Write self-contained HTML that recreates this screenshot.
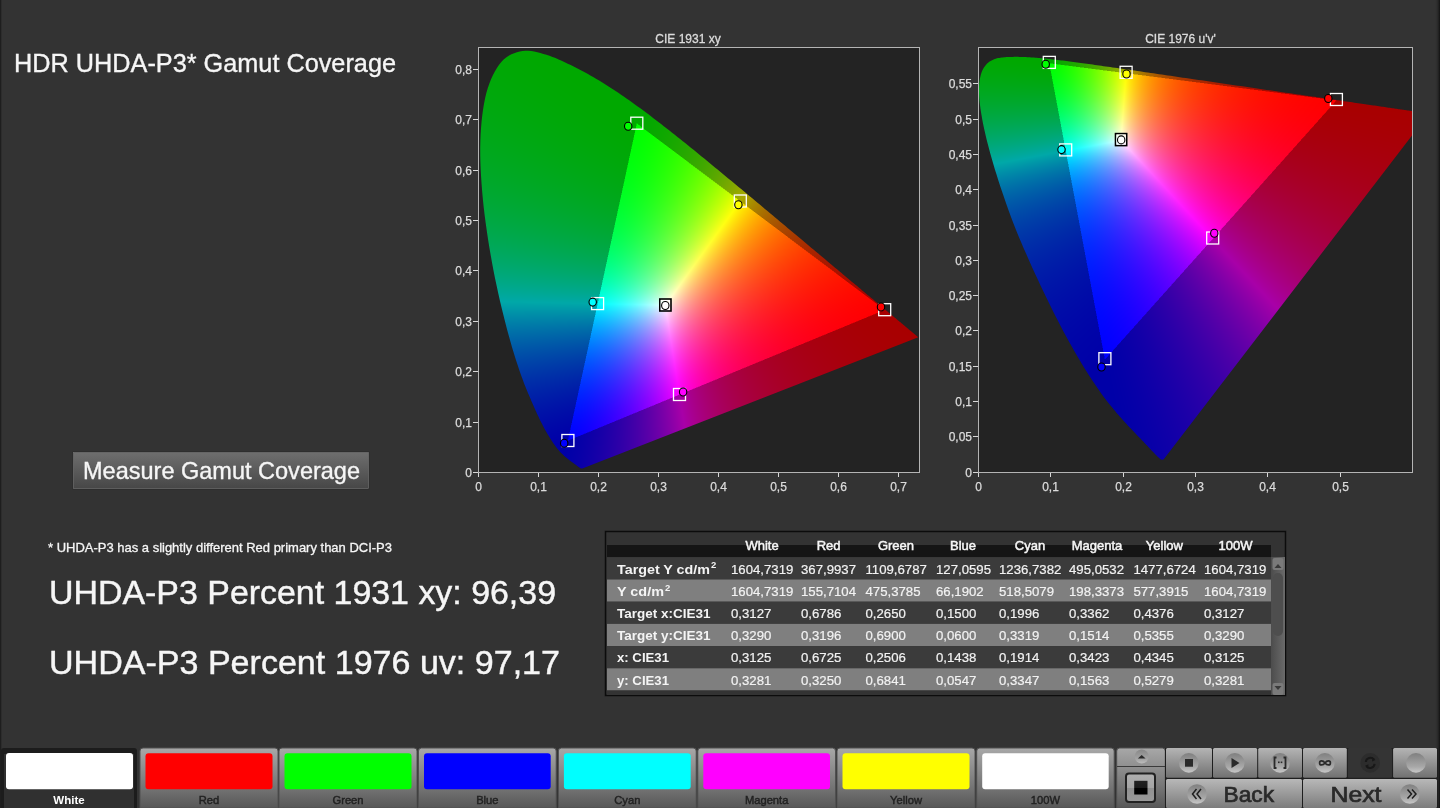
<!DOCTYPE html>
<html><head><meta charset="utf-8">
<style>
html,body{margin:0;padding:0;}
body{width:1440px;height:808px;overflow:hidden;background:#333333;position:relative;font-family:"Liberation Sans",sans-serif;}
canvas{position:absolute;}
.pbg{position:absolute;background:#232323;}
#cv1{left:478px;top:47px;}
#cv2{left:978px;top:47px;}
svg#main{position:absolute;left:0;top:0;}
</style></head><body>
<div class="pbg" style="left:478px;top:47px;width:441px;height:425px"></div><div class="pbg" style="left:978px;top:47px;width:434px;height:425px"></div>
<div id="fb1" class="fb" style="position:absolute;left:478px;top:47px;width:441px;height:425px;overflow:hidden"><svg width="441" height="425" style="position:absolute;left:0;top:0"><defs><clipPath id="fb1c"><path d="M104.3 421.4 L104.3 421.4 L104.3 421.4 L104.3 421.4 L104.3 421.4 L104.3 421.4 L104.3 421.4 L104.3 421.4 L104.3 421.4 L104.3 421.4 L104.2 421.4 L104.2 421.4 L104.2 421.4 L104.2 421.4 L104.2 421.4 L104.2 421.4 L104.2 421.4 L104.1 421.4 L104.1 421.4 L104.1 421.4 L104.1 421.4 L104.1 421.4 L104.1 421.4 L104.1 421.4 L104.0 421.4 L104.0 421.4 L104.0 421.4 L104.0 421.4 L104.0 421.5 L103.9 421.5 L103.9 421.5 L103.9 421.5 L103.9 421.5 L103.8 421.5 L103.8 421.5 L103.8 421.5 L103.8 421.5 L103.8 421.5 L103.7 421.5 L103.7 421.5 L103.7 421.5 L103.7 421.5 L103.6 421.5 L103.6 421.5 L103.6 421.5 L103.5 421.5 L103.5 421.5 L103.5 421.5 L103.4 421.5 L103.4 421.5 L103.4 421.5 L103.3 421.5 L103.3 421.5 L103.3 421.5 L103.2 421.5 L103.2 421.5 L103.1 421.5 L103.1 421.5 L103.0 421.5 L103.0 421.4 L103.0 421.4 L102.9 421.4 L102.8 421.4 L102.8 421.4 L102.7 421.3 L102.7 421.3 L102.6 421.3 L102.5 421.2 L102.4 421.2 L102.3 421.1 L102.2 421.1 L102.2 421.0 L102.1 421.0 L102.0 420.9 L101.9 420.9 L101.8 420.8 L101.7 420.7 L101.6 420.7 L101.5 420.6 L101.3 420.5 L101.2 420.4 L101.1 420.3 L101.0 420.2 L100.8 420.1 L100.7 420.0 L100.5 419.9 L100.3 419.8 L100.2 419.7 L100.0 419.6 L99.8 419.4 L99.7 419.3 L99.5 419.2 L99.3 419.0 L99.1 418.9 L98.9 418.7 L98.7 418.6 L98.5 418.4 L98.3 418.2 L98.1 418.1 L97.8 417.9 L97.6 417.7 L97.4 417.6 L97.1 417.4 L96.8 417.2 L96.5 416.9 L96.2 416.7 L95.9 416.5 L95.6 416.3 L95.3 416.0 L94.9 415.8 L94.6 415.5 L94.2 415.3 L93.8 415.0 L93.5 414.7 L93.1 414.4 L92.7 414.1 L92.3 413.8 L91.8 413.5 L91.4 413.2 L91.0 412.8 L90.5 412.5 L90.0 412.1 L89.5 411.7 L89.0 411.3 L88.5 410.9 L88.0 410.4 L87.4 410.0 L86.9 409.5 L86.3 408.9 L85.7 408.4 L85.1 407.9 L84.5 407.3 L83.9 406.7 L83.3 406.1 L82.6 405.4 L81.9 404.6 L81.2 403.8 L80.5 402.9 L79.7 402.0 L78.8 401.0 L78.0 399.9 L77.2 398.8 L76.2 397.5 L75.3 396.2 L74.4 394.8 L73.4 393.3 L72.4 391.7 L71.3 390.1 L70.3 388.4 L69.2 386.5 L68.1 384.6 L66.9 382.5 L65.7 380.2 L64.4 377.8 L63.2 375.3 L61.9 372.6 L60.5 369.9 L59.1 366.9 L57.7 363.8 L56.2 360.6 L54.7 357.1 L53.1 353.4 L51.5 349.6 L49.8 345.6 L48.1 341.5 L46.4 337.1 L44.6 332.6 L42.9 327.8 L41.2 322.8 L39.4 317.6 L37.7 312.2 L35.9 306.5 L34.2 300.6 L32.4 294.6 L30.6 288.4 L28.9 281.9 L27.2 275.3 L25.5 268.5 L23.8 261.4 L22.1 254.2 L20.4 246.7 L18.7 239.1 L17.1 231.4 L15.5 223.8 L14.1 216.1 L12.7 208.3 L11.4 200.4 L10.1 192.4 L8.8 184.4 L7.7 176.3 L6.7 168.3 L5.7 160.5 L4.9 152.8 L4.2 145.1 L3.6 137.5 L3.1 130.0 L2.7 122.5 L2.4 115.1 L2.2 107.9 L2.2 100.9 L2.3 94.1 L2.6 87.5 L3.0 81.0 L3.6 74.6 L4.2 68.4 L5.0 62.4 L6.0 56.7 L7.1 51.2 L8.3 46.1 L9.7 41.3 L11.3 36.7 L13.0 32.3 L14.9 28.2 L16.8 24.4 L18.9 20.9 L21.1 17.8 L23.3 15.0 L25.6 12.5 L28.1 10.5 L30.7 8.7 L33.4 7.3 L36.1 6.2 L38.9 5.2 L41.7 4.5 L44.5 4.0 L47.4 3.7 L50.3 3.8 L53.3 4.1 L56.3 4.6 L59.3 5.3 L62.4 6.1 L65.4 6.9 L68.4 7.8 L71.5 8.8 L74.5 9.9 L77.6 11.1 L80.6 12.4 L83.7 13.8 L86.7 15.2 L89.7 16.6 L92.7 18.1 L95.7 19.5 L98.5 20.9 L101.4 22.4 L104.3 23.9 L107.2 25.5 L110.0 27.1 L112.8 28.7 L115.6 30.3 L118.4 31.9 L121.2 33.6 L123.9 35.3 L126.7 37.0 L129.4 38.7 L132.1 40.5 L134.9 42.2 L137.6 44.0 L140.3 45.9 L143.1 47.7 L145.8 49.6 L148.5 51.4 L151.2 53.3 L153.9 55.3 L156.6 57.2 L159.3 59.1 L162.0 61.1 L164.7 63.1 L167.4 65.1 L170.0 67.1 L172.7 69.1 L175.4 71.2 L178.1 73.2 L180.8 75.3 L183.4 77.3 L186.1 79.4 L188.8 81.5 L191.4 83.6 L194.1 85.7 L196.8 87.8 L199.5 90.0 L202.1 92.1 L204.8 94.2 L207.5 96.4 L210.2 98.5 L212.9 100.7 L215.6 102.9 L218.2 105.0 L220.9 107.2 L223.6 109.4 L226.3 111.6 L228.9 113.8 L231.6 116.0 L234.3 118.2 L236.9 120.4 L239.6 122.6 L242.3 124.8 L244.9 127.0 L247.6 129.2 L250.3 131.4 L252.9 133.6 L255.6 135.8 L258.2 138.0 L260.9 140.2 L263.5 142.4 L266.1 144.6 L268.8 146.7 L271.4 148.9 L274.0 151.1 L276.6 153.3 L279.2 155.4 L281.8 157.6 L284.4 159.8 L286.9 161.9 L289.5 164.1 L292.1 166.2 L294.6 168.3 L297.1 170.5 L299.7 172.6 L302.2 174.7 L304.7 176.8 L307.1 178.8 L309.6 180.9 L312.1 183.0 L314.5 185.0 L316.9 187.1 L319.4 189.1 L321.8 191.1 L324.1 193.1 L326.5 195.1 L328.8 197.0 L331.2 199.0 L333.5 200.9 L335.8 202.8 L338.1 204.7 L340.3 206.6 L342.5 208.4 L344.7 210.3 L346.9 212.1 L349.0 213.9 L351.2 215.7 L353.2 217.4 L355.3 219.2 L357.4 220.9 L359.4 222.6 L361.3 224.2 L363.2 225.8 L365.1 227.4 L367.0 229.0 L368.8 230.5 L370.6 232.0 L372.3 233.4 L374.1 234.9 L375.8 236.3 L377.4 237.7 L379.1 239.1 L380.8 240.5 L382.4 241.8 L383.9 243.2 L385.5 244.4 L387.0 245.7 L388.5 246.9 L389.9 248.1 L391.3 249.3 L392.7 250.4 L394.0 251.5 L395.3 252.6 L396.6 253.7 L397.8 254.7 L399.0 255.7 L400.2 256.7 L401.3 257.6 L402.4 258.6 L403.5 259.5 L404.6 260.4 L405.6 261.2 L406.6 262.1 L407.6 262.9 L408.5 263.7 L409.4 264.5 L410.3 265.2 L411.2 265.9 L412.0 266.6 L412.9 267.3 L413.6 268.0 L414.4 268.6 L415.2 269.3 L415.9 269.9 L416.6 270.5 L417.3 271.0 L418.0 271.6 L418.6 272.1 L419.2 272.7 L419.9 273.2 L420.5 273.7 L421.1 274.2 L421.6 274.6 L422.2 275.1 L422.7 275.6 L423.2 276.0 L423.7 276.4 L424.2 276.9 L424.7 277.3 L425.2 277.7 L425.7 278.1 L426.2 278.5 L426.6 278.8 L427.1 279.2 L427.5 279.6 L427.9 279.9 L428.3 280.3 L428.7 280.6 L429.1 280.9 L429.5 281.2 L429.9 281.6 L430.2 281.9 L430.6 282.1 L430.9 282.4 L431.2 282.7 L431.6 283.0 L431.9 283.2 L432.2 283.5 L432.5 283.7 L432.8 284.0 L433.0 284.2 L433.3 284.4 L433.6 284.6 L433.8 284.8 L434.0 285.0 L434.3 285.2 L434.5 285.4 L434.7 285.6 L434.9 285.7 L435.1 285.9 L435.3 286.1 L435.5 286.2 L435.7 286.4 L435.8 286.5 L436.0 286.7 L436.2 286.8 L436.3 286.9 L436.5 287.1 L436.6 287.2 L436.8 287.3 L436.9 287.4 L437.0 287.5 L437.1 287.6 L437.3 287.7 L437.4 287.8 L437.5 287.9 L437.6 288.0 L437.7 288.1 L437.8 288.2 L437.9 288.2 L437.9 288.3 L438.0 288.4 L438.1 288.4 L438.1 288.5 L438.2 288.5 L438.3 288.6 L438.4 288.6 L438.4 288.7 L438.5 288.8 L438.5 288.8 L438.6 288.9 L438.7 288.9 L438.8 289.0 L438.9 289.1 L439.0 289.2 L439.1 289.3 L439.2 289.4 L439.3 289.5 L439.4 289.6 L439.5 289.6 L439.6 289.7 L439.7 289.8 L439.8 289.9 L439.9 289.9 L439.9 290.0 L440.0 290.1 L440.1 290.1 L440.1 290.1 L440.2 290.2 L440.2 290.2 L440.2 290.2 L440.2 290.2 L440.3 290.3 L440.3 290.3 L440.3 290.3 L440.3 290.3 Z"/></clipPath>
<linearGradient id="fb1gl" gradientUnits="userSpaceOnUse" x1="134.4" y1="71.1" x2="65.5" y2="388.4"><stop offset="0.000" stop-color="#00a801"/><stop offset="0.125" stop-color="#00a80c"/><stop offset="0.250" stop-color="#00a81f"/><stop offset="0.375" stop-color="#00a83d"/><stop offset="0.500" stop-color="#00a871"/><stop offset="0.625" stop-color="#0089a8"/><stop offset="0.750" stop-color="#0046a8"/><stop offset="0.875" stop-color="#001da8"/><stop offset="1.000" stop-color="#0005a8"/></linearGradient><linearGradient id="fb1gb" gradientUnits="userSpaceOnUse" x1="99.4" y1="416.8" x2="416.2" y2="286.1"><stop offset="0.000" stop-color="#0700a8"/><stop offset="0.125" stop-color="#2b00a8"/><stop offset="0.250" stop-color="#6900a8"/><stop offset="0.375" stop-color="#a80089"/><stop offset="0.500" stop-color="#a8004b"/><stop offset="0.625" stop-color="#a80029"/><stop offset="0.750" stop-color="#a80015"/><stop offset="0.875" stop-color="#a80008"/><stop offset="1.000" stop-color="#a80001"/></linearGradient><linearGradient id="fb1gt" gradientUnits="userSpaceOnUse" x1="162.4" y1="71.6" x2="410.3" y2="258.2"><stop offset="0.000" stop-color="#01a800"/><stop offset="0.125" stop-color="#16a800"/><stop offset="0.250" stop-color="#40a800"/><stop offset="0.375" stop-color="#87a800"/><stop offset="0.500" stop-color="#a86e00"/><stop offset="0.625" stop-color="#a83900"/><stop offset="0.750" stop-color="#a81b00"/><stop offset="0.875" stop-color="#a80a00"/><stop offset="1.000" stop-color="#a80000"/></linearGradient>
</defs><g clip-path="url(#fb1c)"><polygon points="158.8,76.4 572.3,-1827.2 -2000.0,-2000.0 -2000.0,3000.0 -323.6,2297.3" fill="url(#fb1gl)"/><polygon points="89.9,393.7 -1810.8,1178.1 -2000.0,3000.0 3000.0,3000.0 2307.4,-521.5" fill="url(#fb1gb)"/><polygon points="406.7,262.9 1893.9,1382.2 -2000.0,-2000.0 3000.0,-2000.0 -1328.4,-1042.8" fill="url(#fb1gt)"/></g></svg><div style="position:absolute;left:0;top:0;width:441px;height:425px;clip-path:polygon(406.7px 262.9px,158.8px 76.4px,89.9px 393.7px);background:radial-gradient(circle at 187.4px 258.2px,rgba(255,255,255,1) 0px,rgba(255,255,255,0.55) 18px,rgba(255,255,255,0) 70px),conic-gradient(from 35.7deg at 187.4px 258.2px,#ffff00 0.0deg,#ff0000 55.5deg,#ff00ff 135.3deg,#0000ff 180.0deg,#00ffff 235.5deg,#00ff00 315.3deg,#ffff00 360deg);"></div></div><div id="fb2" class="fb" style="position:absolute;left:978px;top:47px;width:434px;height:425px;overflow:hidden"><svg width="434" height="425" style="position:absolute;left:0;top:0"><defs><clipPath id="fb2c"><path d="M185.8 412.3 L185.7 412.3 L185.7 412.3 L185.7 412.3 L185.7 412.3 L185.7 412.3 L185.7 412.3 L185.6 412.3 L185.6 412.3 L185.6 412.3 L185.6 412.3 L185.6 412.4 L185.6 412.4 L185.5 412.4 L185.5 412.5 L185.5 412.5 L185.5 412.5 L185.4 412.5 L185.4 412.5 L185.4 412.5 L185.3 412.5 L185.3 412.5 L185.3 412.5 L185.3 412.5 L185.2 412.5 L185.2 412.5 L185.2 412.6 L185.1 412.6 L185.1 412.6 L185.1 412.7 L185.0 412.7 L185.0 412.7 L184.9 412.8 L184.9 412.8 L184.9 412.8 L184.8 412.8 L184.8 412.8 L184.7 412.8 L184.7 412.8 L184.6 412.8 L184.6 412.8 L184.5 412.8 L184.5 412.8 L184.4 412.8 L184.4 412.8 L184.3 412.8 L184.2 412.8 L184.2 412.8 L184.1 412.8 L184.0 412.8 L184.0 412.8 L183.9 412.8 L183.8 412.8 L183.8 412.8 L183.7 412.8 L183.6 412.8 L183.5 412.8 L183.4 412.7 L183.3 412.7 L183.2 412.6 L183.0 412.5 L182.9 412.4 L182.8 412.3 L182.6 412.2 L182.4 412.1 L182.2 411.9 L182.0 411.8 L181.8 411.6 L181.6 411.4 L181.3 411.2 L181.1 411.0 L180.8 410.8 L180.6 410.5 L180.3 410.2 L180.0 410.0 L179.7 409.7 L179.4 409.4 L179.1 409.1 L178.8 408.8 L178.4 408.4 L178.0 408.0 L177.6 407.6 L177.2 407.2 L176.8 406.8 L176.3 406.3 L175.8 405.8 L175.4 405.3 L174.9 404.8 L174.4 404.3 L173.8 403.7 L173.3 403.1 L172.8 402.5 L172.2 401.9 L171.6 401.3 L171.0 400.6 L170.4 400.0 L169.8 399.3 L169.1 398.6 L168.4 397.9 L167.7 397.2 L167.0 396.4 L166.3 395.6 L165.5 394.9 L164.8 394.0 L163.9 393.2 L163.1 392.3 L162.2 391.4 L161.3 390.4 L160.3 389.4 L159.3 388.4 L158.3 387.4 L157.3 386.3 L156.3 385.2 L155.2 384.1 L154.1 383.0 L153.0 381.8 L151.9 380.6 L150.8 379.4 L149.6 378.2 L148.3 376.8 L147.1 375.5 L145.8 374.0 L144.4 372.6 L143.1 371.0 L141.7 369.5 L140.3 367.8 L138.8 366.1 L137.3 364.4 L135.8 362.5 L134.2 360.6 L132.7 358.7 L131.1 356.7 L129.4 354.7 L127.7 352.5 L126.0 350.2 L124.1 347.7 L122.2 345.0 L120.2 342.1 L118.1 339.0 L115.9 335.8 L113.7 332.5 L111.4 328.9 L109.0 325.3 L106.7 321.4 L104.2 317.4 L101.7 313.3 L99.2 308.9 L96.6 304.4 L93.9 299.8 L91.2 295.0 L88.5 290.1 L85.7 285.0 L83.0 279.8 L80.2 274.4 L77.3 268.8 L74.4 263.0 L71.5 257.1 L68.6 251.1 L65.7 245.1 L62.8 239.0 L59.9 232.8 L57.0 226.7 L54.2 220.4 L51.3 214.0 L48.5 207.6 L45.6 201.2 L42.9 194.8 L40.2 188.4 L37.7 182.1 L35.3 175.9 L32.9 169.6 L30.6 163.4 L28.4 157.2 L26.2 151.1 L24.2 145.0 L22.2 139.1 L20.4 133.4 L18.6 127.9 L16.9 122.4 L15.3 117.0 L13.8 111.8 L12.3 106.7 L11.0 101.7 L9.8 97.0 L8.6 92.4 L7.5 88.0 L6.6 83.8 L5.7 79.8 L4.9 75.9 L4.2 72.2 L3.6 68.6 L3.0 65.2 L2.5 61.9 L2.1 58.7 L1.7 55.8 L1.5 52.9 L1.2 50.3 L1.1 47.7 L1.0 45.3 L1.0 42.9 L1.0 40.6 L1.1 38.5 L1.3 36.4 L1.5 34.4 L1.8 32.6 L2.1 30.8 L2.5 29.2 L2.9 27.6 L3.4 26.0 L3.9 24.6 L4.5 23.2 L5.1 22.0 L5.8 20.8 L6.5 19.7 L7.3 18.6 L8.1 17.7 L8.9 16.8 L9.7 15.9 L10.7 15.2 L11.6 14.5 L12.6 13.9 L13.6 13.4 L14.6 12.9 L15.7 12.5 L16.7 12.1 L17.8 11.7 L18.9 11.4 L20.1 11.1 L21.2 10.9 L22.4 10.7 L23.6 10.6 L24.8 10.4 L26.0 10.3 L27.3 10.2 L28.5 10.1 L29.8 10.0 L31.1 10.0 L32.4 9.9 L33.6 9.9 L34.9 9.9 L36.2 9.9 L37.5 9.9 L38.8 9.9 L40.0 9.9 L41.3 9.9 L42.6 9.9 L43.9 9.9 L45.2 10.0 L46.5 10.0 L47.9 10.1 L49.2 10.2 L50.5 10.2 L51.8 10.3 L53.2 10.4 L54.5 10.5 L55.9 10.6 L57.3 10.7 L58.7 10.8 L60.1 10.9 L61.5 11.0 L63.0 11.2 L64.5 11.3 L65.9 11.4 L67.4 11.6 L68.9 11.7 L70.4 11.9 L72.0 12.1 L73.5 12.2 L75.1 12.4 L76.7 12.6 L78.2 12.8 L79.9 13.0 L81.5 13.2 L83.2 13.4 L84.9 13.6 L86.6 13.8 L88.3 14.0 L90.0 14.2 L91.8 14.5 L93.6 14.7 L95.4 14.9 L97.2 15.2 L99.1 15.4 L101.0 15.7 L102.9 16.0 L104.8 16.2 L106.8 16.5 L108.7 16.8 L110.7 17.0 L112.8 17.3 L114.8 17.6 L116.9 17.9 L119.0 18.2 L121.2 18.5 L123.3 18.8 L125.5 19.1 L127.7 19.4 L130.0 19.8 L132.3 20.1 L134.6 20.4 L136.9 20.8 L139.3 21.1 L141.7 21.4 L144.1 21.8 L146.5 22.1 L149.0 22.5 L151.5 22.9 L154.1 23.2 L156.6 23.6 L159.2 24.0 L161.9 24.4 L164.5 24.8 L167.2 25.1 L169.9 25.5 L172.7 25.9 L175.4 26.4 L178.2 26.8 L181.1 27.2 L183.9 27.6 L186.8 28.0 L189.8 28.4 L192.7 28.9 L195.7 29.3 L198.7 29.7 L201.7 30.2 L204.8 30.6 L207.8 31.1 L210.9 31.5 L214.1 32.0 L217.2 32.5 L220.4 32.9 L223.6 33.4 L226.8 33.8 L230.0 34.3 L233.3 34.8 L236.5 35.2 L239.8 35.7 L243.1 36.2 L246.4 36.7 L249.7 37.2 L253.0 37.7 L256.3 38.1 L259.6 38.6 L262.9 39.1 L266.2 39.6 L269.5 40.1 L272.7 40.5 L275.9 41.0 L279.1 41.5 L282.3 42.0 L285.5 42.4 L288.7 42.9 L291.8 43.3 L295.0 43.8 L298.2 44.3 L301.3 44.7 L304.5 45.2 L307.6 45.6 L310.7 46.1 L313.8 46.5 L316.8 47.0 L319.7 47.4 L322.6 47.8 L325.5 48.2 L328.4 48.6 L331.2 49.0 L333.9 49.5 L336.7 49.9 L339.4 50.2 L342.0 50.6 L344.6 51.0 L347.2 51.4 L349.7 51.8 L352.2 52.1 L354.6 52.5 L357.0 52.8 L359.3 53.2 L361.6 53.5 L363.8 53.8 L366.0 54.1 L368.2 54.5 L370.3 54.8 L372.3 55.1 L374.3 55.4 L376.3 55.6 L378.2 55.9 L380.1 56.2 L381.9 56.5 L383.7 56.7 L385.5 57.0 L387.2 57.2 L388.9 57.5 L390.5 57.7 L392.1 57.9 L393.7 58.2 L395.3 58.4 L396.8 58.6 L398.2 58.8 L399.7 59.0 L401.1 59.3 L402.5 59.5 L403.9 59.7 L405.3 59.9 L406.6 60.1 L407.9 60.2 L409.2 60.4 L410.5 60.6 L411.7 60.8 L412.9 61.0 L414.1 61.2 L415.3 61.3 L416.4 61.5 L417.5 61.7 L418.6 61.8 L419.7 62.0 L420.7 62.1 L421.7 62.3 L422.7 62.4 L423.6 62.5 L424.6 62.7 L425.5 62.8 L426.3 62.9 L427.2 63.0 L428.0 63.2 L428.8 63.3 L429.6 63.4 L430.3 63.5 L431.1 63.6 L431.8 63.7 L432.4 63.8 L433.1 63.9 L433.7 64.0 L434.3 64.1 L434.9 64.2 L435.5 64.3 L436.1 64.3 L436.6 64.4 L437.2 64.5 L437.7 64.6 L438.2 64.7 L438.6 64.7 L439.1 64.8 L439.5 64.9 L440.0 64.9 L440.4 65.0 L440.8 65.0 L441.1 65.1 L441.5 65.1 L441.9 65.2 L442.2 65.2 L442.5 65.3 L442.7 65.3 L443.0 65.4 L443.2 65.4 L443.5 65.4 L443.7 65.5 L443.9 65.5 L444.2 65.5 L444.4 65.6 L444.6 65.6 L444.8 65.6 L445.0 65.7 L445.2 65.7 L445.4 65.7 L445.7 65.8 L446.0 65.8 L446.3 65.8 L446.6 65.9 L447.0 66.0 L447.4 66.0 L447.7 66.0 L448.1 66.1 L448.4 66.2 L448.7 66.2 L448.9 66.2 L449.2 66.3 L449.5 66.3 L449.7 66.3 L449.9 66.4 L450.1 66.4 L450.3 66.4 L450.5 66.5 L450.6 66.5 L450.7 66.5 L450.7 66.5 L450.8 66.5 L450.8 66.5 L450.9 66.5 L450.9 66.5 Z"/></clipPath>
<linearGradient id="fb2gl" gradientUnits="userSpaceOnUse" x1="46.7" y1="20.9" x2="102.3" y2="317.2"><stop offset="0.000" stop-color="#00a804"/><stop offset="0.125" stop-color="#00a831"/><stop offset="0.250" stop-color="#00a880"/><stop offset="0.375" stop-color="#006da8"/><stop offset="0.500" stop-color="#003ba8"/><stop offset="0.625" stop-color="#0020a8"/><stop offset="0.750" stop-color="#0011a8"/><stop offset="0.875" stop-color="#0007a8"/><stop offset="1.000" stop-color="#0001a8"/></linearGradient><linearGradient id="fb2gb" gradientUnits="userSpaceOnUse" x1="145.5" y1="329.2" x2="377.0" y2="70.1"><stop offset="0.000" stop-color="#0400a8"/><stop offset="0.125" stop-color="#1800a8"/><stop offset="0.250" stop-color="#3a00a8"/><stop offset="0.375" stop-color="#7000a8"/><stop offset="0.500" stop-color="#a8008b"/><stop offset="0.625" stop-color="#a8004c"/><stop offset="0.750" stop-color="#a80027"/><stop offset="0.875" stop-color="#a80010"/><stop offset="1.000" stop-color="#a80003"/></linearGradient><linearGradient id="fb2gt" gradientUnits="userSpaceOnUse" x1="72.1" y1="10.3" x2="359.2" y2="47.4"><stop offset="0.000" stop-color="#01a800"/><stop offset="0.125" stop-color="#34a800"/><stop offset="0.250" stop-color="#97a800"/><stop offset="0.375" stop-color="#a85900"/><stop offset="0.500" stop-color="#a82e00"/><stop offset="0.625" stop-color="#a81800"/><stop offset="0.750" stop-color="#a80c00"/><stop offset="0.875" stop-color="#a80400"/><stop offset="1.000" stop-color="#a80000"/></linearGradient>
</defs><g clip-path="url(#fb2c)"><polygon points="71.3,16.3 -262.1,-1761.4 -2000.0,-2000.0 -2000.0,3000.0 460.3,2090.2" fill="url(#fb2gl)"/><polygon points="126.9,312.6 -1262.1,1867.5 -2000.0,3000.0 3000.0,3000.0 1747.4,-1501.6" fill="url(#fb2gb)"/><polygon points="358.4,53.4 2080.9,276.1 -2000.0,-2000.0 3000.0,-2000.0 -1651.2,-206.4" fill="url(#fb2gt)"/></g></svg><div style="position:absolute;left:0;top:0;width:434px;height:425px;clip-path:polygon(358.4px 53.4px,71.3px 16.3px,126.9px 312.6px);background:radial-gradient(circle at 143.1px 93.5px,rgba(255,255,255,1) 0px,rgba(255,255,255,0.55) 18px,rgba(255,255,255,0) 70px),conic-gradient(from 4.2deg at 143.1px 93.5px,#ffff00 0.0deg,#ff0000 75.2deg,#ff00ff 132.8deg,#0000ff 180.0deg,#00ffff 255.2deg,#00ff00 312.9deg,#ffff00 360deg);"></div></div>
<canvas id="cv1" width="441" height="425"></canvas>
<canvas id="cv2" width="434" height="425"></canvas>
<svg id="main" width="1440" height="808" viewBox="0 0 1440 808" font-family="Liberation Sans, sans-serif">
<defs>
<linearGradient id="gBtn" x1="0" y1="0" x2="0" y2="1"><stop offset="0" stop-color="#6e6e6e"/><stop offset="1" stop-color="#474747"/></linearGradient>
<linearGradient id="gTile" x1="0" y1="0" x2="0" y2="1"><stop offset="0" stop-color="#a8a8a8"/><stop offset="0.1" stop-color="#a0a0a0"/><stop offset="0.7" stop-color="#717171"/><stop offset="1" stop-color="#575757"/></linearGradient>
<linearGradient id="gCtlT" x1="0" y1="0" x2="0" y2="1"><stop offset="0" stop-color="#b4b4b4"/><stop offset="1" stop-color="#717171"/></linearGradient><linearGradient id="gCtlB" x1="0" y1="0" x2="0" y2="1"><stop offset="0" stop-color="#b8b8b8"/><stop offset="1" stop-color="#7c7c7c"/></linearGradient>
<linearGradient id="gCirc" x1="0" y1="0" x2="0" y2="1"><stop offset="0" stop-color="#808080"/><stop offset="0.7" stop-color="#a8a8a8"/><stop offset="1" stop-color="#c8c8c8"/></linearGradient>
<linearGradient id="gScroll" x1="0" y1="0" x2="1" y2="0"><stop offset="0" stop-color="#4c4c4c"/><stop offset="1" stop-color="#6a6a6a"/></linearGradient>
<linearGradient id="gRight" x1="0" y1="0" x2="1" y2="0"><stop offset="0" stop-color="#333" stop-opacity="0"/><stop offset="1" stop-color="#111"/></linearGradient>
<linearGradient id="gSq" x1="0" y1="0" x2="0" y2="1"><stop offset="0" stop-color="#b0b0b0"/><stop offset="0.5" stop-color="#a4a4a4"/><stop offset="0.5" stop-color="#909090"/><stop offset="1" stop-color="#9a9a9a"/></linearGradient><linearGradient id="gSqI" x1="0" y1="0" x2="0" y2="1"><stop offset="0" stop-color="#222"/><stop offset="0.5" stop-color="#1a1a1a"/><stop offset="0.5" stop-color="#000"/><stop offset="1" stop-color="#000"/></linearGradient>
</defs>
<rect x="0" y="0" width="1" height="808" fill="#1e1e1e"/><rect x="1" y="0" width="1" height="808" fill="#2c2c2c"/>
<rect x="1435" y="0" width="5" height="808" fill="url(#gRight)"/>
<text x="14" y="72" font-size="26" fill="#f6f6f6" stroke="#f6f6f6" stroke-width="0.35" textLength="382" lengthAdjust="spacingAndGlyphs">HDR UHDA-P3* Gamut Coverage</text>
<rect x="72.5" y="451.5" width="297" height="38" fill="#2a2a2a"/><rect x="73.5" y="452.5" width="295" height="36" fill="url(#gBtn)" stroke="#777" stroke-width="0.6"/>
<text x="83" y="479" font-size="24" fill="#f6f6f6" stroke="#f6f6f6" stroke-width="0.35" textLength="277" lengthAdjust="spacingAndGlyphs">Measure Gamut Coverage</text>
<text x="48" y="552" font-size="13" fill="#f6f6f6" stroke="#f6f6f6" stroke-width="0.3" textLength="344" lengthAdjust="spacingAndGlyphs">* UHDA-P3 has a slightly different Red primary than DCI-P3</text>
<text x="49" y="604" font-size="34" fill="#f6f6f6" stroke="#f6f6f6" stroke-width="0.45" textLength="507" lengthAdjust="spacingAndGlyphs">UHDA-P3 Percent 1931 xy: 96,39</text>
<text x="49" y="674" font-size="34" fill="#f6f6f6" stroke="#f6f6f6" stroke-width="0.45" textLength="511" lengthAdjust="spacingAndGlyphs">UHDA-P3 Percent 1976 uv: 97,17</text>
<rect x="605.5" y="531.5" width="680" height="164" fill="#333" stroke="#0c0c0c" stroke-width="1.5"/>
<rect x="607" y="545" width="664" height="12" fill="#151515"/>
<text x="762" y="550" font-size="13" fill="#f6f6f6" stroke="#f6f6f6" stroke-width="0.5" text-anchor="middle">White</text>
<text x="828.6" y="550" font-size="13" fill="#f6f6f6" stroke="#f6f6f6" stroke-width="0.5" text-anchor="middle">Red</text>
<text x="896" y="550" font-size="13" fill="#f6f6f6" stroke="#f6f6f6" stroke-width="0.5" text-anchor="middle">Green</text>
<text x="963" y="550" font-size="13" fill="#f6f6f6" stroke="#f6f6f6" stroke-width="0.5" text-anchor="middle">Blue</text>
<text x="1030" y="550" font-size="13" fill="#f6f6f6" stroke="#f6f6f6" stroke-width="0.5" text-anchor="middle">Cyan</text>
<text x="1097" y="550" font-size="13" fill="#f6f6f6" stroke="#f6f6f6" stroke-width="0.5" text-anchor="middle">Magenta</text>
<text x="1164.4" y="550" font-size="13" fill="#f6f6f6" stroke="#f6f6f6" stroke-width="0.5" text-anchor="middle">Yellow</text>
<text x="1235.5" y="550" font-size="13" fill="#f6f6f6" stroke="#f6f6f6" stroke-width="0.5" text-anchor="middle">100W</text>
<rect x="607" y="557.3" width="664" height="22.2" fill="#3b3b3b"/>
<text x="617" y="573.6" font-size="13" fill="#f4f4f4" font-weight="bold" textLength="93" lengthAdjust="spacingAndGlyphs">Target Y cd/m</text>
<text x="711" y="568.4" font-size="9.5" fill="#f4f4f4" font-weight="bold">2</text>
<text x="731" y="573.6" font-size="13.2" fill="#f2f2f2" stroke="#f2f2f2" stroke-width="0.2">1604,7319</text>
<text x="801" y="573.6" font-size="13.2" fill="#f2f2f2" stroke="#f2f2f2" stroke-width="0.2">367,9937</text>
<text x="865.5" y="573.6" font-size="13.2" fill="#f2f2f2" stroke="#f2f2f2" stroke-width="0.2">1109,6787</text>
<text x="936" y="573.6" font-size="13.2" fill="#f2f2f2" stroke="#f2f2f2" stroke-width="0.2">127,0595</text>
<text x="999" y="573.6" font-size="13.2" fill="#f2f2f2" stroke="#f2f2f2" stroke-width="0.2">1236,7382</text>
<text x="1069" y="573.6" font-size="13.2" fill="#f2f2f2" stroke="#f2f2f2" stroke-width="0.2">495,0532</text>
<text x="1133.4" y="573.6" font-size="13.2" fill="#f2f2f2" stroke="#f2f2f2" stroke-width="0.2">1477,6724</text>
<text x="1204" y="573.6" font-size="13.2" fill="#f2f2f2" stroke="#f2f2f2" stroke-width="0.2">1604,7319</text>
<rect x="607" y="579.5" width="664" height="22.2" fill="#7f7f7f"/>
<text x="617" y="595.8" font-size="13" fill="#f4f4f4" font-weight="bold" textLength="47" lengthAdjust="spacingAndGlyphs">Y cd/m</text>
<text x="665" y="590.6" font-size="9.5" fill="#f4f4f4" font-weight="bold">2</text>
<text x="731" y="595.8" font-size="13.2" fill="#f2f2f2" stroke="#f2f2f2" stroke-width="0.2">1604,7319</text>
<text x="801" y="595.8" font-size="13.2" fill="#f2f2f2" stroke="#f2f2f2" stroke-width="0.2">155,7104</text>
<text x="865.5" y="595.8" font-size="13.2" fill="#f2f2f2" stroke="#f2f2f2" stroke-width="0.2">475,3785</text>
<text x="936" y="595.8" font-size="13.2" fill="#f2f2f2" stroke="#f2f2f2" stroke-width="0.2">66,1902</text>
<text x="999" y="595.8" font-size="13.2" fill="#f2f2f2" stroke="#f2f2f2" stroke-width="0.2">518,5079</text>
<text x="1069" y="595.8" font-size="13.2" fill="#f2f2f2" stroke="#f2f2f2" stroke-width="0.2">198,3373</text>
<text x="1133.4" y="595.8" font-size="13.2" fill="#f2f2f2" stroke="#f2f2f2" stroke-width="0.2">577,3915</text>
<text x="1204" y="595.8" font-size="13.2" fill="#f2f2f2" stroke="#f2f2f2" stroke-width="0.2">1604,7319</text>
<rect x="607" y="601.7" width="664" height="22.2" fill="#3b3b3b"/>
<text x="617" y="618.0" font-size="13" fill="#f4f4f4" font-weight="bold" textLength="93.5" lengthAdjust="spacingAndGlyphs">Target x:CIE31</text>
<text x="731" y="618.0" font-size="13.2" fill="#f2f2f2" stroke="#f2f2f2" stroke-width="0.2">0,3127</text>
<text x="801" y="618.0" font-size="13.2" fill="#f2f2f2" stroke="#f2f2f2" stroke-width="0.2">0,6786</text>
<text x="865.5" y="618.0" font-size="13.2" fill="#f2f2f2" stroke="#f2f2f2" stroke-width="0.2">0,2650</text>
<text x="936" y="618.0" font-size="13.2" fill="#f2f2f2" stroke="#f2f2f2" stroke-width="0.2">0,1500</text>
<text x="999" y="618.0" font-size="13.2" fill="#f2f2f2" stroke="#f2f2f2" stroke-width="0.2">0,1996</text>
<text x="1069" y="618.0" font-size="13.2" fill="#f2f2f2" stroke="#f2f2f2" stroke-width="0.2">0,3362</text>
<text x="1133.4" y="618.0" font-size="13.2" fill="#f2f2f2" stroke="#f2f2f2" stroke-width="0.2">0,4376</text>
<text x="1204" y="618.0" font-size="13.2" fill="#f2f2f2" stroke="#f2f2f2" stroke-width="0.2">0,3127</text>
<rect x="607" y="623.9" width="664" height="22.2" fill="#7f7f7f"/>
<text x="617" y="640.2" font-size="13" fill="#f4f4f4" font-weight="bold" textLength="93.5" lengthAdjust="spacingAndGlyphs">Target y:CIE31</text>
<text x="731" y="640.2" font-size="13.2" fill="#f2f2f2" stroke="#f2f2f2" stroke-width="0.2">0,3290</text>
<text x="801" y="640.2" font-size="13.2" fill="#f2f2f2" stroke="#f2f2f2" stroke-width="0.2">0,3196</text>
<text x="865.5" y="640.2" font-size="13.2" fill="#f2f2f2" stroke="#f2f2f2" stroke-width="0.2">0,6900</text>
<text x="936" y="640.2" font-size="13.2" fill="#f2f2f2" stroke="#f2f2f2" stroke-width="0.2">0,0600</text>
<text x="999" y="640.2" font-size="13.2" fill="#f2f2f2" stroke="#f2f2f2" stroke-width="0.2">0,3319</text>
<text x="1069" y="640.2" font-size="13.2" fill="#f2f2f2" stroke="#f2f2f2" stroke-width="0.2">0,1514</text>
<text x="1133.4" y="640.2" font-size="13.2" fill="#f2f2f2" stroke="#f2f2f2" stroke-width="0.2">0,5355</text>
<text x="1204" y="640.2" font-size="13.2" fill="#f2f2f2" stroke="#f2f2f2" stroke-width="0.2">0,3290</text>
<rect x="607" y="646.1" width="664" height="22.2" fill="#3b3b3b"/>
<text x="617" y="662.4" font-size="13" fill="#f4f4f4" font-weight="bold" textLength="52" lengthAdjust="spacingAndGlyphs">x: CIE31</text>
<text x="731" y="662.4" font-size="13.2" fill="#f2f2f2" stroke="#f2f2f2" stroke-width="0.2">0,3125</text>
<text x="801" y="662.4" font-size="13.2" fill="#f2f2f2" stroke="#f2f2f2" stroke-width="0.2">0,6725</text>
<text x="865.5" y="662.4" font-size="13.2" fill="#f2f2f2" stroke="#f2f2f2" stroke-width="0.2">0,2506</text>
<text x="936" y="662.4" font-size="13.2" fill="#f2f2f2" stroke="#f2f2f2" stroke-width="0.2">0,1438</text>
<text x="999" y="662.4" font-size="13.2" fill="#f2f2f2" stroke="#f2f2f2" stroke-width="0.2">0,1914</text>
<text x="1069" y="662.4" font-size="13.2" fill="#f2f2f2" stroke="#f2f2f2" stroke-width="0.2">0,3423</text>
<text x="1133.4" y="662.4" font-size="13.2" fill="#f2f2f2" stroke="#f2f2f2" stroke-width="0.2">0,4345</text>
<text x="1204" y="662.4" font-size="13.2" fill="#f2f2f2" stroke="#f2f2f2" stroke-width="0.2">0,3125</text>
<rect x="607" y="668.3" width="664" height="22.2" fill="#7f7f7f"/>
<text x="617" y="684.6" font-size="13" fill="#f4f4f4" font-weight="bold" textLength="52" lengthAdjust="spacingAndGlyphs">y: CIE31</text>
<text x="731" y="684.6" font-size="13.2" fill="#f2f2f2" stroke="#f2f2f2" stroke-width="0.2">0,3281</text>
<text x="801" y="684.6" font-size="13.2" fill="#f2f2f2" stroke="#f2f2f2" stroke-width="0.2">0,3250</text>
<text x="865.5" y="684.6" font-size="13.2" fill="#f2f2f2" stroke="#f2f2f2" stroke-width="0.2">0,6841</text>
<text x="936" y="684.6" font-size="13.2" fill="#f2f2f2" stroke="#f2f2f2" stroke-width="0.2">0,0547</text>
<text x="999" y="684.6" font-size="13.2" fill="#f2f2f2" stroke="#f2f2f2" stroke-width="0.2">0,3347</text>
<text x="1069" y="684.6" font-size="13.2" fill="#f2f2f2" stroke="#f2f2f2" stroke-width="0.2">0,1563</text>
<text x="1133.4" y="684.6" font-size="13.2" fill="#f2f2f2" stroke="#f2f2f2" stroke-width="0.2">0,5279</text>
<text x="1204" y="684.6" font-size="13.2" fill="#f2f2f2" stroke="#f2f2f2" stroke-width="0.2">0,3281</text>
<rect x="607" y="690.5" width="664" height="4.5" fill="#333"/>
<rect x="1271" y="557" width="14" height="138" fill="url(#gScroll)"/>
<rect x="1272.5" y="558" width="11" height="12" rx="2" fill="#7a7a7a"/><path d="M1274.5 568 L1278 564 L1281.5 568 Z" fill="#3a3a3a"/>
<rect x="1272.5" y="683" width="11" height="12" rx="2" fill="#7a7a7a"/><path d="M1274.5 686 L1278 690 L1281.5 686 Z" fill="#3a3a3a"/>
<rect x="1273" y="573" width="10" height="63" rx="5" fill="#4e4e4e"/>
<path d="M1 808 V751 Q1 748 4 748 H134 Q137 748 137 751 V808 Z" fill="#1c1c1c"/>
<rect x="4" y="754" width="130" height="54" fill="#303030"/>
<rect x="6" y="753" width="127" height="36.3" rx="3" fill="#ffffff"/>
<text x="69.0" y="804" font-size="11.5" fill="#ffffff" text-anchor="middle" font-weight="bold">White</text>
<path d="M140 808 V751 Q140 748 143 748 H275 Q278 748 278 751 V808 Z" fill="url(#gTile)" stroke="#505050" stroke-width="1"/>
<rect x="145.5" y="753.2" width="127" height="36" rx="3" fill="#ff0000"/>
<text x="209.0" y="803.8" font-size="11.2" fill="#222222" stroke="#222222" stroke-width="0.45" text-anchor="middle">Red</text>
<path d="M279 808 V751 Q279 748 282 748 H414 Q417 748 417 751 V808 Z" fill="url(#gTile)" stroke="#505050" stroke-width="1"/>
<rect x="284.5" y="753.2" width="127" height="36" rx="3" fill="#00ff00"/>
<text x="348.0" y="803.8" font-size="11.2" fill="#222222" stroke="#222222" stroke-width="0.45" text-anchor="middle">Green</text>
<path d="M418.5 808 V751 Q418.5 748 421.5 748 H553.2 Q556.2 748 556.2 751 V808 Z" fill="url(#gTile)" stroke="#505050" stroke-width="1"/>
<rect x="424.0" y="753.2" width="126.70000000000005" height="36" rx="3" fill="#0000ff"/>
<text x="487.35" y="803.8" font-size="11.2" fill="#222222" stroke="#222222" stroke-width="0.45" text-anchor="middle">Blue</text>
<path d="M558.4 808 V751 Q558.4 748 561.4 748 H693.2 Q696.2 748 696.2 751 V808 Z" fill="url(#gTile)" stroke="#505050" stroke-width="1"/>
<rect x="563.9" y="753.2" width="126.80000000000007" height="36" rx="3" fill="#00ffff"/>
<text x="627.3" y="803.8" font-size="11.2" fill="#222222" stroke="#222222" stroke-width="0.45" text-anchor="middle">Cyan</text>
<path d="M697.8 808 V751 Q697.8 748 700.8 748 H832.5 Q835.5 748 835.5 751 V808 Z" fill="url(#gTile)" stroke="#505050" stroke-width="1"/>
<rect x="703.3" y="753.2" width="126.70000000000005" height="36" rx="3" fill="#ff00ff"/>
<text x="766.65" y="803.8" font-size="11.2" fill="#222222" stroke="#222222" stroke-width="0.45" text-anchor="middle">Magenta</text>
<path d="M837 808 V751 Q837 748 840 748 H972 Q975 748 975 751 V808 Z" fill="url(#gTile)" stroke="#505050" stroke-width="1"/>
<rect x="842.5" y="753.2" width="127" height="36" rx="3" fill="#ffff00"/>
<text x="906.0" y="803.8" font-size="11.2" fill="#222222" stroke="#222222" stroke-width="0.45" text-anchor="middle">Yellow</text>
<path d="M976.7 808 V751 Q976.7 748 979.7 748 H1111.2 Q1114.2 748 1114.2 751 V808 Z" fill="url(#gTile)" stroke="#505050" stroke-width="1"/>
<rect x="982.2" y="753.2" width="126.5" height="36" rx="3" fill="#ffffff"/>
<text x="1045.45" y="803.8" font-size="11.2" fill="#222222" stroke="#222222" stroke-width="0.45" text-anchor="middle">100W</text>
<path d="M1116.7 808 V751 Q1116.7 748 1119.7 748 H1162.3 Q1165.3 748 1165.3 751 V808 Z" fill="url(#gTile)" stroke="#505050"/>
<line x1="1117" y1="766.5" x2="1165" y2="766.5" stroke="#3a3a3a"/>
<circle cx="1141.7" cy="756.5" r="7" fill="url(#gCirc)" opacity="0.8"/><path d="M1137.8 758.5 L1141.7 755 L1145.6 758.5 Z" fill="#2a2a2a"/>
<rect x="1126" y="773.5" width="29" height="28.5" rx="3" fill="url(#gSq)" stroke="#222" stroke-width="2"/>
<rect x="1134.2" y="780.8" width="13.3" height="13.7" fill="url(#gSqI)"/>
<rect x="1165" y="748" width="273" height="60" fill="#1e1e1e"/>
<rect x="1166" y="748" width="46.0" height="29.8" rx="1.5" fill="url(#gCtlT)"/>
<rect x="1213" y="748" width="44.2" height="29.8" rx="1.5" fill="url(#gCtlT)"/>
<rect x="1258.2" y="748" width="43.8" height="29.8" rx="1.5" fill="url(#gCtlT)"/>
<rect x="1303" y="748" width="43.8" height="29.8" rx="1.5" fill="url(#gCtlT)"/>
<rect x="1347.8" y="748" width="44.3" height="29.8" rx="1.5" fill="#343434"/>
<rect x="1393.1" y="748" width="43.9" height="29.8" rx="1.5" fill="url(#gCtlT)"/>
<rect x="1166" y="779" width="136" height="29" rx="1.5" fill="url(#gCtlB)"/>
<rect x="1303" y="779" width="134" height="29" rx="1.5" fill="url(#gCtlB)"/>
<circle cx="1188.8" cy="762.9" r="9.8" fill="url(#gCirc)"/>
<circle cx="1234.8" cy="762.9" r="9.8" fill="url(#gCirc)"/>
<circle cx="1280" cy="762.9" r="9.8" fill="url(#gCirc)"/>
<circle cx="1324.9" cy="762.9" r="9.8" fill="url(#gCirc)"/>
<circle cx="1416" cy="762.9" r="9.8" fill="url(#gCirc)"/>
<circle cx="1370.2" cy="762.9" r="9.8" fill="#2c2c2c"/>
<rect x="1185" y="759" width="8" height="7.7" fill="#2a2a2a"/>
<path d="M1231.5 758 L1239.5 763 L1231.5 768 Z" fill="#2a2a2a"/>
<path d="M1276.5 757.5 h-2 v10.5 h2 M1283.5 757.5 h2 v10.5 h-2" stroke="#2a2a2a" stroke-width="1.8" fill="none"/><rect x="1278" y="761.5" width="1.6" height="1.6" fill="#2a2a2a"/><rect x="1280.7" y="761.5" width="1.6" height="1.6" fill="#2a2a2a"/>
<path d="M1325 762.9 C1323 760.2 1319.6 760.2 1319.6 762.9 C1319.6 765.6 1323 765.6 1325 762.9 C1327 760.2 1330.4 760.2 1330.4 762.9 C1330.4 765.6 1327 765.6 1325 762.9 Z" stroke="#2a2a2a" stroke-width="1.7" fill="none"/>
<path d="M1365.8 762 a4.6 4.6 0 0 1 8.2 -2.4 M1374.6 763.8 a4.6 4.6 0 0 1 -8.2 2.4" stroke="#181818" stroke-width="2" fill="none"/><path d="M1372.5 757.5 l3 2.5 l-3.5 1.5 Z M1368 768.3 l-3 -2.5 l3.5 -1.5 Z" fill="#181818"/>
<circle cx="1197" cy="794" r="9.8" fill="url(#gCirc)"/>
<circle cx="1409.8" cy="794" r="9.8" fill="url(#gCirc)"/>
<path d="M1196.5 789 l-4 5 l4 5 M1201 789 l-4 5 l4 5" stroke="#1e1e1e" stroke-width="1.5" fill="none"/>
<path d="M1407.5 789.5 l4 4.5 l-4 4.5 M1412 789.5 l4 4.5 l-4 4.5" stroke="#1e1e1e" stroke-width="1.5" fill="none"/>
<text x="1223.5" y="802" font-size="22" fill="#2a2a2a" textLength="50.5" lengthAdjust="spacingAndGlyphs" stroke="#2a2a2a" stroke-width="0.7">Back</text>
<text x="1330.5" y="802" font-size="22" fill="#2a2a2a" textLength="51" lengthAdjust="spacingAndGlyphs" stroke="#2a2a2a" stroke-width="0.7">Next</text>
<g font-size="12" fill="#dcdcdc">
<rect x="478.5" y="47.5" width="441" height="425" fill="none" stroke="#b4b4b4" stroke-width="1"/>
<line x1="478.5" y1="473" x2="478.5" y2="477" stroke="#d8d8d8" stroke-width="1"/>
<text x="478.5" y="491" text-anchor="middle" stroke="#dcdcdc" stroke-width="0.25">0</text>
<line x1="538.5" y1="473" x2="538.5" y2="477" stroke="#d8d8d8" stroke-width="1"/>
<text x="538.5" y="491" text-anchor="middle" stroke="#dcdcdc" stroke-width="0.25">0,1</text>
<line x1="598.5" y1="473" x2="598.5" y2="477" stroke="#d8d8d8" stroke-width="1"/>
<text x="598.5" y="491" text-anchor="middle" stroke="#dcdcdc" stroke-width="0.25">0,2</text>
<line x1="658.5" y1="473" x2="658.5" y2="477" stroke="#d8d8d8" stroke-width="1"/>
<text x="658.5" y="491" text-anchor="middle" stroke="#dcdcdc" stroke-width="0.25">0,3</text>
<line x1="718.5" y1="473" x2="718.5" y2="477" stroke="#d8d8d8" stroke-width="1"/>
<text x="718.5" y="491" text-anchor="middle" stroke="#dcdcdc" stroke-width="0.25">0,4</text>
<line x1="778.5" y1="473" x2="778.5" y2="477" stroke="#d8d8d8" stroke-width="1"/>
<text x="778.5" y="491" text-anchor="middle" stroke="#dcdcdc" stroke-width="0.25">0,5</text>
<line x1="838.5" y1="473" x2="838.5" y2="477" stroke="#d8d8d8" stroke-width="1"/>
<text x="838.5" y="491" text-anchor="middle" stroke="#dcdcdc" stroke-width="0.25">0,6</text>
<line x1="898.5" y1="473" x2="898.5" y2="477" stroke="#d8d8d8" stroke-width="1"/>
<text x="898.5" y="491" text-anchor="middle" stroke="#dcdcdc" stroke-width="0.25">0,7</text>
<line x1="473" y1="472.5" x2="478" y2="472.5" stroke="#d8d8d8" stroke-width="1"/>
<text x="472" y="476.5" text-anchor="end" stroke="#dcdcdc" stroke-width="0.25">0</text>
<line x1="473" y1="422.5" x2="478" y2="422.5" stroke="#d8d8d8" stroke-width="1"/>
<text x="472" y="426.5" text-anchor="end" stroke="#dcdcdc" stroke-width="0.25">0,1</text>
<line x1="473" y1="371.5" x2="478" y2="371.5" stroke="#d8d8d8" stroke-width="1"/>
<text x="472" y="375.5" text-anchor="end" stroke="#dcdcdc" stroke-width="0.25">0,2</text>
<line x1="473" y1="321.5" x2="478" y2="321.5" stroke="#d8d8d8" stroke-width="1"/>
<text x="472" y="325.5" text-anchor="end" stroke="#dcdcdc" stroke-width="0.25">0,3</text>
<line x1="473" y1="270.5" x2="478" y2="270.5" stroke="#d8d8d8" stroke-width="1"/>
<text x="472" y="274.5" text-anchor="end" stroke="#dcdcdc" stroke-width="0.25">0,4</text>
<line x1="473" y1="220.5" x2="478" y2="220.5" stroke="#d8d8d8" stroke-width="1"/>
<text x="472" y="224.5" text-anchor="end" stroke="#dcdcdc" stroke-width="0.25">0,5</text>
<line x1="473" y1="170.5" x2="478" y2="170.5" stroke="#d8d8d8" stroke-width="1"/>
<text x="472" y="174.5" text-anchor="end" stroke="#dcdcdc" stroke-width="0.25">0,6</text>
<line x1="473" y1="119.5" x2="478" y2="119.5" stroke="#d8d8d8" stroke-width="1"/>
<text x="472" y="123.5" text-anchor="end" stroke="#dcdcdc" stroke-width="0.25">0,7</text>
<line x1="473" y1="69.5" x2="478" y2="69.5" stroke="#d8d8d8" stroke-width="1"/>
<text x="472" y="73.5" text-anchor="end" stroke="#dcdcdc" stroke-width="0.25">0,8</text>
<text x="688" y="43" text-anchor="middle" stroke="#dcdcdc" stroke-width="0.3">CIE 1931 xy</text>
<rect x="878.7" y="303.7" width="12" height="12" fill="none" stroke="#fff" stroke-width="1.3"/>
<rect x="630.8" y="117.2" width="12" height="12" fill="none" stroke="#fff" stroke-width="1.3"/>
<rect x="561.9" y="434.5" width="12" height="12" fill="none" stroke="#fff" stroke-width="1.3"/>
<rect x="591.6" y="297.6" width="12" height="12" fill="none" stroke="#fff" stroke-width="1.3"/>
<rect x="673.5" y="388.5" width="12" height="12" fill="none" stroke="#fff" stroke-width="1.3"/>
<rect x="734.3" y="195.0" width="12" height="12" fill="none" stroke="#fff" stroke-width="1.3"/>
<rect x="659.8" y="299.0" width="11.2" height="12" fill="none" stroke="#000" stroke-width="1.6"/>
<rect x="661.3" y="300.5" width="8.2" height="9" fill="none" stroke="#fff" stroke-width="1"/>
<ellipse cx="881.0" cy="307.0" rx="3.7" ry="4" fill="#ff0000" stroke="#000" stroke-width="1.1"/>
<ellipse cx="628.2" cy="126.2" rx="3.7" ry="4" fill="#00ff00" stroke="#000" stroke-width="1.1"/>
<ellipse cx="564.2" cy="443.2" rx="3.7" ry="4" fill="#0000ff" stroke="#000" stroke-width="1.1"/>
<ellipse cx="592.7" cy="302.1" rx="3.7" ry="4" fill="#00ffff" stroke="#000" stroke-width="1.1"/>
<ellipse cx="683.1" cy="392.0" rx="3.7" ry="4" fill="#ff00ff" stroke="#000" stroke-width="1.1"/>
<ellipse cx="738.4" cy="204.8" rx="3.7" ry="4" fill="#ffff00" stroke="#000" stroke-width="1.1"/>
<ellipse cx="665.3" cy="305.5" rx="3.7" ry="4" fill="#ffffff" stroke="#000" stroke-width="1.1"/>
</g>
<g font-size="12" fill="#dcdcdc">
<rect x="978.5" y="47.5" width="434" height="425" fill="none" stroke="#b4b4b4" stroke-width="1"/>
<line x1="978.5" y1="473" x2="978.5" y2="477" stroke="#d8d8d8" stroke-width="1"/>
<text x="978.5" y="491" text-anchor="middle" stroke="#dcdcdc" stroke-width="0.25">0</text>
<line x1="1050.5" y1="473" x2="1050.5" y2="477" stroke="#d8d8d8" stroke-width="1"/>
<text x="1050.5" y="491" text-anchor="middle" stroke="#dcdcdc" stroke-width="0.25">0,1</text>
<line x1="1123.5" y1="473" x2="1123.5" y2="477" stroke="#d8d8d8" stroke-width="1"/>
<text x="1123.5" y="491" text-anchor="middle" stroke="#dcdcdc" stroke-width="0.25">0,2</text>
<line x1="1195.5" y1="473" x2="1195.5" y2="477" stroke="#d8d8d8" stroke-width="1"/>
<text x="1195.5" y="491" text-anchor="middle" stroke="#dcdcdc" stroke-width="0.25">0,3</text>
<line x1="1267.5" y1="473" x2="1267.5" y2="477" stroke="#d8d8d8" stroke-width="1"/>
<text x="1267.5" y="491" text-anchor="middle" stroke="#dcdcdc" stroke-width="0.25">0,4</text>
<line x1="1340.5" y1="473" x2="1340.5" y2="477" stroke="#d8d8d8" stroke-width="1"/>
<text x="1340.5" y="491" text-anchor="middle" stroke="#dcdcdc" stroke-width="0.25">0,5</text>
<line x1="973" y1="472.5" x2="978" y2="472.5" stroke="#d8d8d8" stroke-width="1"/>
<text x="972" y="476.5" text-anchor="end" stroke="#dcdcdc" stroke-width="0.25">0</text>
<line x1="973" y1="436.5" x2="978" y2="436.5" stroke="#d8d8d8" stroke-width="1"/>
<text x="972" y="440.5" text-anchor="end" stroke="#dcdcdc" stroke-width="0.25">0,05</text>
<line x1="973" y1="401.5" x2="978" y2="401.5" stroke="#d8d8d8" stroke-width="1"/>
<text x="972" y="405.5" text-anchor="end" stroke="#dcdcdc" stroke-width="0.25">0,1</text>
<line x1="973" y1="366.5" x2="978" y2="366.5" stroke="#d8d8d8" stroke-width="1"/>
<text x="972" y="370.5" text-anchor="end" stroke="#dcdcdc" stroke-width="0.25">0,15</text>
<line x1="973" y1="330.5" x2="978" y2="330.5" stroke="#d8d8d8" stroke-width="1"/>
<text x="972" y="334.5" text-anchor="end" stroke="#dcdcdc" stroke-width="0.25">0,2</text>
<line x1="973" y1="295.5" x2="978" y2="295.5" stroke="#d8d8d8" stroke-width="1"/>
<text x="972" y="299.5" text-anchor="end" stroke="#dcdcdc" stroke-width="0.25">0,25</text>
<line x1="973" y1="260.5" x2="978" y2="260.5" stroke="#d8d8d8" stroke-width="1"/>
<text x="972" y="264.5" text-anchor="end" stroke="#dcdcdc" stroke-width="0.25">0,3</text>
<line x1="973" y1="225.5" x2="978" y2="225.5" stroke="#d8d8d8" stroke-width="1"/>
<text x="972" y="229.5" text-anchor="end" stroke="#dcdcdc" stroke-width="0.25">0,35</text>
<line x1="973" y1="189.5" x2="978" y2="189.5" stroke="#d8d8d8" stroke-width="1"/>
<text x="972" y="193.5" text-anchor="end" stroke="#dcdcdc" stroke-width="0.25">0,4</text>
<line x1="973" y1="154.5" x2="978" y2="154.5" stroke="#d8d8d8" stroke-width="1"/>
<text x="972" y="158.5" text-anchor="end" stroke="#dcdcdc" stroke-width="0.25">0,45</text>
<line x1="973" y1="119.5" x2="978" y2="119.5" stroke="#d8d8d8" stroke-width="1"/>
<text x="972" y="123.5" text-anchor="end" stroke="#dcdcdc" stroke-width="0.25">0,5</text>
<line x1="973" y1="83.5" x2="978" y2="83.5" stroke="#d8d8d8" stroke-width="1"/>
<text x="972" y="87.5" text-anchor="end" stroke="#dcdcdc" stroke-width="0.25">0,55</text>
<text x="1180.5" y="43" text-anchor="middle" stroke="#dcdcdc" stroke-width="0.3">CIE 1976 u'v'</text>
<rect x="1330.4" y="93.5" width="12" height="12" fill="none" stroke="#fff" stroke-width="1.3"/>
<rect x="1043.3" y="56.4" width="12" height="12" fill="none" stroke="#fff" stroke-width="1.3"/>
<rect x="1098.9" y="352.7" width="12" height="12" fill="none" stroke="#fff" stroke-width="1.3"/>
<rect x="1059.7" y="143.9" width="12" height="12" fill="none" stroke="#fff" stroke-width="1.3"/>
<rect x="1206.7" y="232.0" width="12" height="12" fill="none" stroke="#fff" stroke-width="1.3"/>
<rect x="1120.1" y="66.3" width="12" height="12" fill="none" stroke="#fff" stroke-width="1.3"/>
<rect x="1115.5" y="133.6" width="11.2" height="12" fill="none" stroke="#000" stroke-width="1.6"/>
<rect x="1117.0" y="135.1" width="8.2" height="9" fill="none" stroke="#fff" stroke-width="1"/>
<ellipse cx="1328.3" cy="98.5" rx="3.7" ry="4" fill="#ff0000" stroke="#000" stroke-width="1.1"/>
<ellipse cx="1045.7" cy="64.3" rx="3.7" ry="4" fill="#00ff00" stroke="#000" stroke-width="1.1"/>
<ellipse cx="1101.5" cy="367.0" rx="3.7" ry="4" fill="#0000ff" stroke="#000" stroke-width="1.1"/>
<ellipse cx="1061.5" cy="149.6" rx="3.7" ry="4" fill="#00ffff" stroke="#000" stroke-width="1.1"/>
<ellipse cx="1214.3" cy="233.2" rx="3.7" ry="4" fill="#ff00ff" stroke="#000" stroke-width="1.1"/>
<ellipse cx="1126.5" cy="74.0" rx="3.7" ry="4" fill="#ffff00" stroke="#000" stroke-width="1.1"/>
<ellipse cx="1121.2" cy="139.9" rx="3.7" ry="4" fill="#ffffff" stroke="#000" stroke-width="1.1"/>
</g>
</svg>
<script>
(function(){
var D={"c1":{"w":441,"h":425,"x0":0,"y0":423.9,"sx":599.3,"sy":503.6,"loc":[[104.34,421.38],[104.33,421.38],[104.33,421.38],[104.32,421.38],[104.32,421.38],[104.31,421.38],[104.3,421.38],[104.29,421.38],[104.28,421.38],[104.27,421.39],[104.25,421.39],[104.24,421.4],[104.22,421.41],[104.21,421.41],[104.19,421.42],[104.17,421.43],[104.16,421.43],[104.14,421.43],[104.13,421.43],[104.12,421.43],[104.1,421.43],[104.09,421.43],[104.07,421.43],[104.06,421.43],[104.04,421.43],[104.02,421.44],[104.0,421.44],[103.98,421.45],[103.95,421.46],[103.93,421.47],[103.91,421.47],[103.88,421.48],[103.86,421.48],[103.84,421.49],[103.82,421.49],[103.79,421.49],[103.77,421.49],[103.75,421.48],[103.73,421.48],[103.7,421.48],[103.68,421.48],[103.65,421.48],[103.62,421.48],[103.6,421.48],[103.57,421.48],[103.54,421.48],[103.5,421.48],[103.47,421.48],[103.44,421.48],[103.41,421.48],[103.37,421.49],[103.34,421.49],[103.3,421.49],[103.26,421.49],[103.22,421.49],[103.18,421.49],[103.14,421.48],[103.09,421.47],[103.05,421.46],[103.0,421.45],[102.95,421.43],[102.9,421.41],[102.84,421.39],[102.78,421.36],[102.72,421.33],[102.65,421.3],[102.58,421.26],[102.5,421.22],[102.42,421.18],[102.33,421.13],[102.24,421.09],[102.15,421.03],[102.06,420.98],[101.97,420.92],[101.87,420.86],[101.78,420.8],[101.67,420.73],[101.57,420.66],[101.46,420.59],[101.35,420.51],[101.22,420.43],[101.09,420.33],[100.95,420.24],[100.81,420.14],[100.66,420.03],[100.51,419.93],[100.35,419.81],[100.19,419.69],[100.02,419.57],[99.85,419.44],[99.68,419.31],[99.5,419.17],[99.32,419.03],[99.14,418.88],[98.94,418.73],[98.74,418.57],[98.52,418.41],[98.31,418.25],[98.08,418.08],[97.85,417.91],[97.61,417.73],[97.36,417.55],[97.1,417.36],[96.83,417.16],[96.55,416.95],[96.25,416.73],[95.94,416.51],[95.62,416.28],[95.28,416.03],[94.94,415.79],[94.59,415.53],[94.22,415.26],[93.85,414.99],[93.47,414.7],[93.08,414.42],[92.68,414.13],[92.27,413.82],[91.84,413.51],[91.41,413.18],[90.96,412.84],[90.49,412.47],[90.02,412.09],[89.53,411.7],[89.02,411.29],[88.51,410.87],[87.98,410.43],[87.43,409.96],[86.87,409.47],[86.3,408.94],[85.72,408.4],[85.13,407.86],[84.53,407.31],[83.92,406.72],[83.28,406.09],[82.62,405.4],[81.93,404.65],[81.21,403.81],[80.45,402.9],[79.66,401.96],[78.85,400.96],[78.01,399.89],[77.15,398.75],[76.25,397.53],[75.33,396.21],[74.37,394.79],[73.39,393.29],[72.38,391.73],[71.35,390.1],[70.29,388.37],[69.19,386.53],[68.06,384.57],[66.89,382.46],[65.68,380.19],[64.44,377.78],[63.16,375.27],[61.85,372.63],[60.5,369.86],[59.12,366.93],[57.69,363.83],[56.23,360.55],[54.72,357.07],[53.15,353.41],[51.52,349.6],[49.84,345.63],[48.13,341.47],[46.39,337.13],[44.65,332.58],[42.9,327.82],[41.17,322.83],[39.44,317.61],[37.69,312.16],[35.93,306.51],[34.16,300.65],[32.4,294.59],[30.65,288.35],[28.92,281.93],[27.21,275.34],[25.5,268.52],[23.78,261.44],[22.05,254.15],[20.35,246.69],[18.68,239.1],[17.07,231.44],[15.53,223.75],[14.08,216.06],[12.7,208.31],[11.36,200.41],[10.07,192.42],[8.84,184.37],[7.7,176.33],[6.65,168.35],[5.72,160.48],[4.91,152.76],[4.22,145.14],[3.61,137.53],[3.09,129.97],[2.68,122.5],[2.39,115.14],[2.22,107.94],[2.2,100.93],[2.34,94.14],[2.61,87.52],[3.02,80.99],[3.56,74.61],[4.24,68.4],[5.05,62.41],[6.0,56.67],[7.09,51.22],[8.33,46.1],[9.73,41.26],[11.3,36.66],[13.02,32.3],[14.87,28.22],[16.84,24.43],[18.92,20.94],[21.08,17.79],[23.31,14.98],[25.65,12.54],[28.12,10.47],[30.69,8.73],[33.36,7.3],[36.1,6.15],[38.89,5.23],[41.7,4.52],[44.53,4.0],[47.39,3.72],[50.31,3.76],[53.28,4.07],[56.29,4.59],[59.33,5.27],[62.37,6.07],[65.42,6.94],[68.44,7.83],[71.47,8.78],[74.51,9.88],[77.58,11.1],[80.64,12.41],[83.69,13.79],[86.73,15.2],[89.74,16.63],[92.71,18.05],[95.65,19.47],[98.55,20.93],[101.44,22.42],[104.3,23.95],[107.15,25.5],[109.98,27.07],[112.8,28.67],[115.6,30.29],[118.4,31.92],[121.17,33.59],[123.93,35.27],[126.68,36.98],[129.41,38.71],[132.14,40.47],[134.87,42.24],[137.6,44.03],[140.33,45.85],[143.05,47.69],[145.77,49.56],[148.48,51.44],[151.19,53.34],[153.89,55.26],[156.6,57.2],[159.29,59.14],[161.99,61.1],[164.68,63.08],[167.36,65.08],[170.04,67.09],[172.72,69.12],[175.39,71.16],[178.07,73.2],[180.75,75.26],[183.43,77.32],[186.1,79.4],[188.77,81.49],[191.45,83.59],[194.12,85.7],[196.79,87.82],[199.47,89.95],[202.14,92.08],[204.82,94.22],[207.51,96.37],[210.19,98.53],[212.88,100.69],[215.56,102.86],[218.24,105.04],[220.92,107.22],[223.6,109.4],[226.27,111.59],[228.94,113.78],[231.61,115.97],[234.28,118.17],[236.95,120.38],[239.61,122.58],[242.27,124.78],[244.93,126.98],[247.59,129.18],[250.26,131.38],[252.92,133.58],[255.58,135.78],[258.23,137.98],[260.88,140.17],[263.52,142.37],[266.15,144.55],[268.77,146.74],[271.39,148.92],[274.0,151.1],[276.61,153.28],[279.21,155.45],[281.8,157.62],[284.38,159.78],[286.94,161.93],[289.5,164.07],[292.06,166.21],[294.6,168.34],[297.13,170.46],[299.66,172.57],[302.17,174.68],[304.66,176.77],[307.14,178.85],[309.61,180.92],[312.07,182.98],[314.51,185.03],[316.94,187.06],[319.36,189.09],[321.76,191.1],[324.14,193.09],[326.5,195.06],[328.84,197.02],[331.17,198.97],[333.49,200.9],[335.78,202.81],[338.05,204.71],[340.3,206.58],[342.53,208.44],[344.72,210.27],[346.88,212.09],[349.03,213.89],[351.16,215.68],[353.25,217.44],[355.32,219.18],[357.36,220.9],[359.36,222.58],[361.32,224.22],[363.24,225.83],[365.12,227.41],[366.97,228.96],[368.78,230.47],[370.57,231.97],[372.32,233.43],[374.05,234.88],[375.76,236.31],[377.45,237.72],[379.11,239.11],[380.75,240.48],[382.36,241.83],[383.94,243.15],[385.48,244.44],[386.99,245.71],[388.47,246.93],[389.9,248.13],[391.3,249.29],[392.67,250.43],[394.0,251.53],[395.3,252.61],[396.57,253.66],[397.8,254.69],[399.01,255.7],[400.19,256.68],[401.34,257.64],[402.45,258.58],[403.53,259.49],[404.58,260.37],[405.61,261.24],[406.61,262.08],[407.58,262.9],[408.53,263.69],[409.45,264.47],[410.33,265.21],[411.19,265.94],[412.03,266.64],[412.85,267.32],[413.64,267.99],[414.42,268.64],[415.17,269.27],[415.9,269.88],[416.61,270.47],[417.3,271.04],[417.96,271.59],[418.61,272.13],[419.25,272.66],[419.87,273.17],[420.47,273.68],[421.06,274.17],[421.62,274.64],[422.17,275.1],[422.7,275.55],[423.23,275.99],[423.74,276.42],[424.24,276.85],[424.74,277.27],[425.22,277.67],[425.7,278.07],[426.16,278.46],[426.61,278.84],[427.05,279.21],[427.48,279.57],[427.9,279.92],[428.31,280.27],[428.71,280.6],[429.1,280.93],[429.48,281.25],[429.85,281.56],[430.21,281.86],[430.56,282.15],[430.9,282.44],[431.23,282.71],[431.55,282.98],[431.87,283.24],[432.17,283.48],[432.47,283.72],[432.75,283.96],[433.03,284.18],[433.29,284.4],[433.55,284.62],[433.8,284.82],[434.03,285.02],[434.26,285.21],[434.47,285.39],[434.69,285.57],[434.89,285.74],[435.09,285.91],[435.29,286.08],[435.47,286.24],[435.66,286.39],[435.83,286.53],[436.0,286.68],[436.16,286.81],[436.32,286.94],[436.47,287.07],[436.62,287.2],[436.76,287.31],[436.89,287.43],[437.02,287.54],[437.15,287.64],[437.27,287.74],[437.38,287.84],[437.49,287.93],[437.59,288.01],[437.68,288.09],[437.77,288.16],[437.85,288.23],[437.93,288.29],[438.0,288.36],[438.07,288.42],[438.15,288.48],[438.22,288.54],[438.28,288.6],[438.35,288.65],[438.41,288.7],[438.47,288.75],[438.53,288.81],[438.61,288.87],[438.69,288.94],[438.78,289.01],[438.88,289.1],[438.99,289.19],[439.1,289.28],[439.22,289.38],[439.33,289.47],[439.43,289.56],[439.53,289.64],[439.62,289.72],[439.7,289.79],[439.79,289.86],[439.87,289.93],[439.94,289.99],[440.01,290.05],[440.07,290.1],[440.13,290.14],[440.17,290.18],[440.2,290.21],[440.23,290.23],[440.25,290.25],[440.27,290.26],[440.28,290.28],[440.29,290.29],[440.31,290.29]],"uv":false},"c2":{"w":434,"h":425,"x0":0,"y0":424.0,"sx":723.3,"sy":705.8,"loc":[[185.75,412.29],[185.74,412.29],[185.73,412.28],[185.71,412.28],[185.7,412.27],[185.68,412.27],[185.66,412.27],[185.64,412.28],[185.63,412.29],[185.61,412.31],[185.59,412.34],[185.57,412.37],[185.55,412.4],[185.53,412.44],[185.51,412.47],[185.49,412.5],[185.47,412.52],[185.44,412.53],[185.41,412.53],[185.38,412.53],[185.35,412.52],[185.32,412.51],[185.29,412.51],[185.26,412.51],[185.23,412.52],[185.19,412.54],[185.16,412.57],[185.13,412.6],[185.09,412.64],[185.06,412.67],[185.02,412.71],[184.99,412.73],[184.95,412.75],[184.91,412.76],[184.87,412.77],[184.82,412.77],[184.78,412.77],[184.73,412.76],[184.69,412.76],[184.64,412.76],[184.59,412.76],[184.53,412.76],[184.48,412.76],[184.42,412.76],[184.36,412.76],[184.3,412.76],[184.24,412.76],[184.17,412.76],[184.1,412.76],[184.04,412.76],[183.97,412.78],[183.91,412.79],[183.84,412.8],[183.77,412.81],[183.69,412.81],[183.6,412.8],[183.5,412.76],[183.4,412.72],[183.29,412.66],[183.17,412.6],[183.04,412.52],[182.91,412.43],[182.76,412.33],[182.6,412.22],[182.42,412.08],[182.23,411.93],[182.02,411.77],[181.81,411.59],[181.57,411.4],[181.33,411.2],[181.08,410.98],[180.82,410.75],[180.55,410.5],[180.27,410.24],[179.99,409.98],[179.7,409.7],[179.39,409.4],[179.08,409.09],[178.75,408.76],[178.39,408.41],[178.02,408.03],[177.62,407.63],[177.21,407.21],[176.77,406.77],[176.32,406.31],[175.85,405.83],[175.37,405.33],[174.87,404.81],[174.36,404.27],[173.84,403.72],[173.3,403.14],[172.76,402.54],[172.19,401.93],[171.61,401.3],[171.01,400.64],[170.39,399.98],[169.75,399.29],[169.09,398.59],[168.42,397.88],[167.73,397.16],[167.03,396.42],[166.29,395.65],[165.54,394.86],[164.75,394.03],[163.92,393.17],[163.06,392.28],[162.17,391.35],[161.26,390.4],[160.31,389.42],[159.34,388.41],[158.34,387.38],[157.32,386.31],[156.28,385.22],[155.21,384.11],[154.13,382.98],[153.03,381.83],[151.9,380.65],[150.75,379.43],[149.56,378.16],[148.34,376.84],[147.08,375.46],[145.78,374.02],[144.45,372.55],[143.09,371.04],[141.7,369.47],[140.27,367.84],[138.81,366.15],[137.31,364.37],[135.78,362.52],[134.22,360.61],[132.65,358.69],[131.05,356.72],[129.41,354.67],[127.72,352.5],[125.97,350.18],[124.13,347.69],[122.21,344.99],[120.2,342.09],[118.1,339.04],[115.93,335.84],[113.69,332.47],[111.39,328.95],[109.04,325.27],[106.65,321.43],[104.21,317.44],[101.72,313.27],[99.17,308.94],[96.56,304.45],[93.9,299.8],[91.2,295.0],[88.47,290.06],[85.72,284.97],[82.96,279.75],[80.16,274.36],[77.3,268.76],[74.4,263.01],[71.49,257.12],[68.56,251.12],[65.65,245.06],[62.75,238.96],[59.9,232.85],[57.05,226.68],[54.18,220.39],[51.3,214.02],[48.45,207.6],[45.64,201.17],[42.9,194.76],[40.24,188.4],[37.71,182.13],[35.27,175.9],[32.9,169.64],[30.61,163.39],[28.39,157.18],[26.25,151.05],[24.2,145.03],[22.23,139.14],[20.37,133.44],[18.59,127.87],[16.9,122.39],[15.3,117.02],[13.78,111.77],[12.35,106.67],[11.01,101.73],[9.76,96.96],[8.6,92.38],[7.54,88.0],[6.57,83.8],[5.7,79.77],[4.91,75.89],[4.21,72.18],[3.58,68.61],[3.01,65.18],[2.51,61.88],[2.08,58.73],[1.73,55.76],[1.46,52.94],[1.25,50.26],[1.11,47.71],[1.03,45.26],[1.01,42.91],[1.04,40.64],[1.13,38.46],[1.28,36.39],[1.49,34.44],[1.76,32.59],[2.09,30.83],[2.46,29.16],[2.89,27.56],[3.36,26.04],[3.88,24.6],[4.46,23.24],[5.09,21.98],[5.78,20.79],[6.5,19.68],[7.27,18.65],[8.06,17.68],[8.89,16.78],[9.74,15.95],[10.65,15.2],[11.59,14.54],[12.57,13.94],[13.57,13.4],[14.6,12.91],[15.65,12.47],[16.72,12.05],[17.81,11.68],[18.93,11.37],[20.07,11.12],[21.24,10.91],[22.42,10.73],[23.62,10.58],[24.83,10.44],[26.04,10.3],[27.27,10.18],[28.52,10.09],[29.79,10.02],[31.06,9.97],[32.35,9.93],[33.64,9.9],[34.92,9.89],[36.21,9.87],[37.49,9.86],[38.77,9.86],[40.05,9.87],[41.33,9.88],[42.62,9.91],[43.92,9.94],[45.22,9.99],[46.53,10.03],[47.85,10.09],[49.18,10.15],[50.5,10.22],[51.84,10.3],[53.18,10.38],[54.54,10.47],[55.91,10.57],[57.3,10.67],[58.71,10.78],[60.12,10.9],[61.55,11.02],[62.99,11.15],[64.45,11.29],[65.92,11.43],[67.4,11.58],[68.91,11.73],[70.43,11.89],[71.96,12.06],[73.51,12.23],[75.07,12.41],[76.65,12.59],[78.25,12.78],[79.87,12.98],[81.52,13.18],[83.18,13.38],[84.86,13.59],[86.56,13.8],[88.27,14.02],[90.01,14.25],[91.77,14.48],[93.56,14.71],[95.37,14.95],[97.21,15.2],[99.07,15.44],[100.95,15.7],[102.86,15.96],[104.79,16.22],[106.75,16.49],[108.73,16.76],[110.74,17.04],[112.77,17.33],[114.83,17.61],[116.91,17.91],[119.02,18.21],[121.15,18.51],[123.31,18.82],[125.5,19.13],[127.72,19.45],[129.98,19.77],[132.26,20.09],[134.56,20.42],[136.9,20.76],[139.27,21.1],[141.66,21.44],[144.08,21.79],[146.54,22.14],[149.02,22.5],[151.53,22.87],[154.07,23.23],[156.64,23.61],[159.24,23.99],[161.86,24.37],[164.52,24.76],[167.21,25.15],[169.92,25.54],[172.67,25.94],[175.45,26.35],[178.25,26.76],[181.09,27.17],[183.95,27.59],[186.84,28.01],[189.75,28.44],[192.7,28.87],[195.67,29.31],[198.68,29.74],[201.71,30.19],[204.77,30.63],[207.85,31.08],[210.95,31.54],[214.07,31.99],[217.21,32.45],[220.38,32.91],[223.58,33.37],[226.8,33.84],[230.03,34.31],[233.28,34.78],[236.53,35.25],[239.79,35.73],[243.07,36.21],[246.37,36.69],[249.69,37.18],[253.01,37.67],[256.34,38.15],[259.65,38.64],[262.95,39.12],[266.22,39.6],[269.46,40.08],[272.69,40.55],[275.91,41.02],[279.12,41.49],[282.31,41.95],[285.5,42.41],[288.67,42.88],[291.83,43.34],[295.0,43.8],[298.17,44.26],[301.34,44.72],[304.49,45.18],[307.62,45.64],[310.71,46.09],[313.76,46.54],[316.76,46.97],[319.72,47.4],[322.64,47.82],[325.52,48.24],[328.37,48.65],[331.18,49.05],[333.94,49.45],[336.67,49.85],[339.35,50.24],[341.99,50.62],[344.6,51.0],[347.16,51.38],[349.68,51.75],[352.16,52.11],[354.59,52.47],[356.98,52.82],[359.31,53.16],[361.6,53.49],[363.83,53.82],[366.02,54.14],[368.17,54.46],[370.26,54.76],[372.32,55.07],[374.33,55.36],[376.3,55.65],[378.23,55.93],[380.1,56.2],[381.94,56.46],[383.73,56.72],[385.48,56.97],[387.19,57.22],[388.87,57.47],[390.52,57.71],[392.14,57.94],[393.72,58.17],[395.26,58.4],[396.76,58.62],[398.24,58.83],[399.68,59.05],[401.11,59.26],[402.52,59.46],[403.91,59.67],[405.27,59.86],[406.61,60.06],[407.92,60.25],[409.21,60.44],[410.47,60.63],[411.71,60.81],[412.92,60.98],[414.11,61.16],[415.27,61.33],[416.41,61.5],[417.52,61.66],[418.61,61.82],[419.67,61.97],[420.7,62.13],[421.71,62.27],[422.69,62.41],[423.64,62.55],[424.57,62.68],[425.47,62.81],[426.34,62.93],[427.19,63.05],[428.02,63.17],[428.82,63.29],[429.59,63.4],[430.34,63.51],[431.06,63.61],[431.76,63.71],[432.43,63.81],[433.08,63.91],[433.72,64.0],[434.34,64.09],[434.94,64.18],[435.52,64.27],[436.09,64.35],[436.63,64.43],[437.16,64.51],[437.67,64.58],[438.16,64.65],[438.64,64.72],[439.1,64.79],[439.54,64.86],[439.97,64.92],[440.38,64.98],[440.77,65.04],[441.15,65.09],[441.51,65.14],[441.85,65.19],[442.17,65.24],[442.46,65.28],[442.73,65.32],[442.99,65.36],[443.23,65.4],[443.47,65.43],[443.71,65.47],[443.94,65.5],[444.17,65.53],[444.38,65.56],[444.58,65.59],[444.77,65.62],[444.97,65.65],[445.18,65.68],[445.41,65.71],[445.67,65.75],[445.97,65.8],[446.29,65.84],[446.64,65.9],[447.01,65.95],[447.37,66.0],[447.73,66.05],[448.06,66.1],[448.37,66.15],[448.66,66.19],[448.94,66.23],[449.22,66.27],[449.48,66.31],[449.72,66.35],[449.94,66.38],[450.14,66.41],[450.31,66.43],[450.46,66.45],[450.57,66.47],[450.66,66.48],[450.73,66.49],[450.78,66.5],[450.83,66.51],[450.86,66.51],[450.9,66.52]],"uv":true}};
var Mi=[2.493496911941426, -0.9313836179191243, -0.40271078445071695, -0.8306785513055278, 1.763628491119335, 0.023777307884391252, 0.03283963904397335, -0.07512629753895282, 0.9585475767827658];
var DIM=0.66, GAM=1.3;
function draw(id,c){
  var cv=document.getElementById(id);if(!cv.getContext)return;
  var ctx=cv.getContext('2d');
  var off=document.createElement('canvas');off.width=c.w;off.height=c.h;
  var o=off.getContext('2d');var img=o.createImageData(c.w,c.h);var d=img.data;
  var SS=[0.25,0.75];
  for(var py=0;py<c.h;py++){for(var px=0;px<c.w;px++){
   var ar=0,ag=0,ab=0,n=0;
   for(var sy=0;sy<2;sy++)for(var sx=0;sx<2;sx++){
    var a=(px+SS[sx]-c.x0)/c.sx,b=(c.y0-(py+SS[sy]))/c.sy,x,y;
    if(c.uv){var den=6*a-16*b+12;x=9*a/den;y=4*b/den;}else{x=a;y=b;}
    if(y<=1e-4){n++;continue;}
    var X=x/y,Z=(1-x-y)/y;
    var r=Mi[0]*X+Mi[1]+Mi[2]*Z,g=Mi[3]*X+Mi[4]+Mi[5]*Z,bl=Mi[6]*X+Mi[7]+Mi[8]*Z;
    var out=(r<0||g<0||bl<0);
    if(r<0)r=0;if(g<0)g=0;if(bl<0)bl=0;
    var m=Math.max(r,g,bl);if(m<=0){n++;continue;}
    r/=m;g/=m;bl/=m;
    if(GAM!=1){r=Math.pow(r,GAM);g=Math.pow(g,GAM);bl=Math.pow(bl,GAM);}
    if(out){r*=DIM;g*=DIM;bl*=DIM;}
    ar+=r;ag+=g;ab+=bl;n++;
   }
   var i=(py*c.w+px)*4;d[i]=ar/n*255;d[i+1]=ag/n*255;d[i+2]=ab/n*255;d[i+3]=255;
  }}
  o.putImageData(img,0,0);
  ctx.save();ctx.beginPath();var L=c.loc;ctx.moveTo(L[0][0],L[0][1]);
  for(var k=1;k<L.length;k++)ctx.lineTo(L[k][0],L[k][1]);
  ctx.closePath();ctx.clip();ctx.drawImage(off,0,0);ctx.restore();
}
draw('cv1',D.c1);draw('cv2',D.c2);
var f=document.querySelectorAll('.fb');for(var q=0;q<f.length;q++)f[q].style.display='none';
})();
</script>
</body></html>
